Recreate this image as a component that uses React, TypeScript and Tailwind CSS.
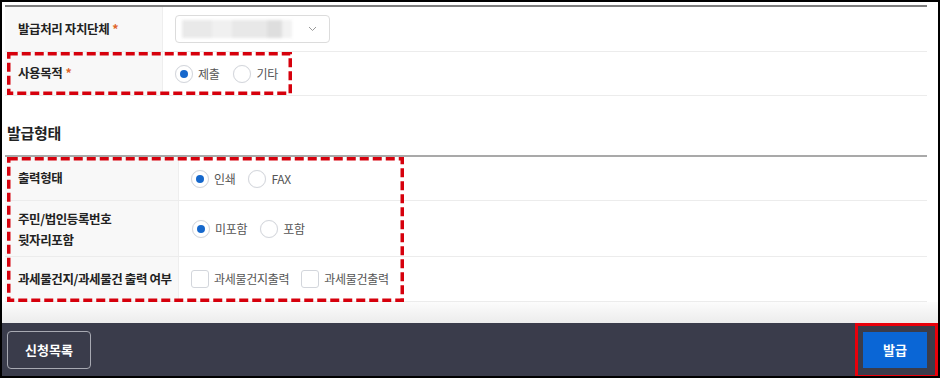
import React from "react";

const font = { fontFamily: '"Noto Sans CJK KR", "Noto Sans", sans-serif' };

function Radio({ checked, label }: { checked?: boolean; label: string }) {
  return (
    <div className="flex items-center">
      <span className="flex h-[18px] w-[18px] items-center justify-center rounded-full border border-[#d3d6dc] bg-white shadow-[0_0_1px_rgba(0,0,0,0.08)]">
        {checked && <span className="h-[8px] w-[8px] rounded-full bg-[#1668cc]" />}
      </span>
      <span className="ml-[5px] whitespace-nowrap text-[12px] tracking-[-0.3px] text-[#555]">{label}</span>
    </div>
  );
}

function Check({ label }: { label: string }) {
  return (
    <div className="flex items-center">
      <span className="h-[18px] w-[18px] rounded-[3px] border border-[#d3d6dc] bg-white" />
      <span className="ml-[5px] whitespace-nowrap text-[12px] tracking-[-0.3px] text-[#555]">{label}</span>
    </div>
  );
}

function Dashed({ className }: { className: string }) {
  return (
    <svg className={"pointer-events-none absolute " + className} preserveAspectRatio="none">
      <rect x="1.75" y="1.75" width="calc(100% - 3.5px)" height="calc(100% - 3.5px)" fill="none" stroke="#d6000c" strokeWidth="3.5" strokeDasharray="9 4" />
    </svg>
  );
}

const labelCls = "flex items-center whitespace-nowrap border-r border-[#eeeeee] bg-[#f8f8f8] pl-[13px] text-[12.5px] font-bold tracking-[-0.4px] text-[#222]";

export default function App() {
  return (
    <div style={font} className="relative flex h-[378px] w-[940px] flex-col overflow-hidden border-2 border-black bg-white">
      <div className="flex flex-col pl-[3px] pr-[11px] pt-[3px]">
        <div className="h-[2px] bg-[#7d7d7d]" />
        {/* row 1 */}
        <div className="flex h-[45px] border-b border-[#ececec]">
          <div className={labelCls + " w-[158px]"}>
            발급처리 자치단체<span className="ml-[3px] text-[#e0662a]">*</span>
          </div>
          <div className="flex items-center pl-[12px]">
            <div className="flex h-[28px] w-[155px] items-center rounded-[4px] border border-[#dcdcdc] bg-white pl-[6px] pr-[12px]">
              <div className="flex h-[18px] w-[110px] blur-[1.5px]">
                <div className="w-[30px] bg-[#e9e9e9]" />
                <div className="w-[20px] bg-[#f0f0f0]" />
                <div className="w-[35px] bg-[#e8e8e8]" />
                <div className="w-[15px] bg-[#dedede]" />
                <div className="w-[10px] bg-[#f2f2f2]" />
              </div>
              <svg className="ml-auto" width="9" height="6" viewBox="0 0 9 6">
                <path d="M1 1 L4.5 4.5 L8 1" fill="none" stroke="#999" strokeWidth="1" />
              </svg>
            </div>
          </div>
        </div>
        {/* row 2 */}
        <div className="relative flex h-[44px] border-b border-[#ececec]">
          <div className={labelCls + " w-[158px]"}>
            사용목적<span className="ml-[3px] text-[#e0662a]">*</span>
          </div>
          <div className="flex items-center gap-[14px] pl-[12px]">
            <Radio checked label="제출" />
            <Radio label="기타" />
          </div>
          <Dashed className="left-[2px] top-0 h-[43px] w-[285px]" />
        </div>
        {/* title */}
        <div className="flex h-[59px] items-end pb-[11px] pl-[2px] text-[15px] font-bold tracking-[-0.3px] text-[#222]">
          발급형태
        </div>
        <div className="h-[2px] bg-[#a9a9a9]" />
        <div className="relative flex flex-col">
          <div className="flex h-[44px] border-b border-[#ececec]">
            <div className={labelCls + " w-[174px]"}>출력형태</div>
            <div className="flex items-center gap-[13px] pl-[12px]">
              <Radio checked label="인쇄" />
              <Radio label="FAX" />
            </div>
          </div>
          <div className="flex h-[56px] border-b border-[#ececec]">
            <div className={labelCls + " w-[174px] flex-col !items-start justify-center leading-[21px]"}>
              <span>주민/법인등록번호</span>
              <span>뒷자리포함</span>
            </div>
            <div className="flex items-center gap-[13px] pl-[13px]">
              <Radio checked label="미포함" />
              <Radio label="포함" />
            </div>
          </div>
          <div className="flex h-[45px] border-b border-[#ececec]">
            <div className={labelCls + " w-[174px]"}>과세물건지/과세물건 출력 여부</div>
            <div className="flex items-center gap-[12px] pl-[12px]">
              <Check label="과세물건지출력" />
              <Check label="과세물건출력" />
            </div>
          </div>
          <Dashed className="left-[2px] top-0 h-[145px] w-[397px]" />
        </div>
      </div>
      <div className="h-[21px] bg-gradient-to-b from-[#fcfcfc] to-[#ececec]" />
      <div className="flex flex-1 items-start bg-[#3a3c4b] pl-[5px] pt-[8px]">
        <div className="flex h-[38px] w-[84px] items-center justify-center rounded-[4px] border border-[#a7a9b2] text-[13px] font-bold text-white">
          신청목록
        </div>
        <div className="ml-auto mr-[11px] mt-[1px] flex h-[36px] w-[64px] items-center justify-center bg-[#0a66d6] text-[13px] font-bold text-white">
          발급
        </div>
      </div>
      <div className="pointer-events-none absolute left-[853px] top-[321px] h-[55px] w-[83px] border-[3px] border-[#e8000b]" />
    </div>
  );
}
